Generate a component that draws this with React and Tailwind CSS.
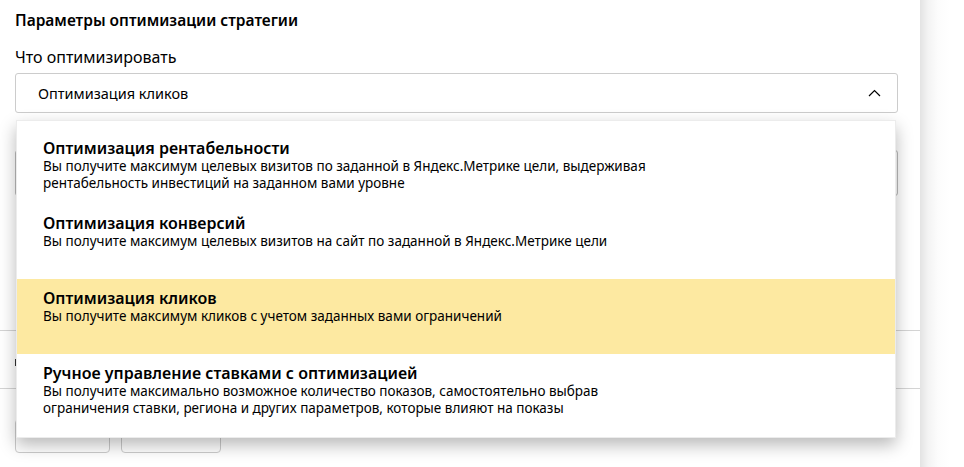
import React from "react";

const items = [
  {
    title: "Оптимизация рентабельности",
    desc: [
      "Вы получите максимум целевых визитов по заданной в Яндекс.Метрике цели, выдерживая",
      "рентабельность инвестиций на заданном вами уровне",
    ],
  },
  {
    title: "Оптимизация конверсий",
    desc: ["Вы получите максимум целевых визитов на сайт по заданной в Яндекс.Метрике цели"],
  },
  {
    title: "Оптимизация кликов",
    desc: ["Вы получите максимум кликов с учетом заданных вами ограничений"],
    active: true,
  },
  {
    title: "Ручное управление ставками с оптимизацией",
    desc: [
      "Вы получите максимально возможное количество показов, самостоятельно выбрав",
      "ограничения ставки, региона и других параметров, которые влияют на показы",
    ],
  },
];

export default function App() {
  return (
    <div className="flex w-[964px] h-[467px] overflow-hidden bg-white text-black font-['Noto_Sans',Arial,sans-serif]">
      <div className="relative w-[920px] h-full bg-white">
        <div className="pt-[10px]">
          <div className="px-[15px]">
            <h2 className="text-[15.5px] leading-[20px] font-semibold">Параметры оптимизации стратегии</h2>
            <div className="mt-[16px] text-[16px] leading-[22px]">Что оптимизировать</div>
            <div className="mt-[5px] w-[883px] h-[40px] rounded-[3px] border border-[#cccccc] flex items-center justify-between pl-[22px] pr-[16px]">
              <span className="text-[14.5px] leading-[20px]">Оптимизация кликов</span>
              <svg width="13" height="8" viewBox="0 0 13 8">
                <polyline points="1,7 6.5,1.5 12,7" fill="none" stroke="#000" strokeWidth="1.2" />
              </svg>
            </div>
            <div className="mt-[37px] w-[883px] h-[46px] rounded-[3px] border border-[#bbbbbb]" />
          </div>
          <div className="mt-[134px] border-t border-[#d4d4d4] h-[58px] px-[15px] pt-[28px]">
            <div className="w-[2px] h-[7px] bg-[#333333]" />
          </div>
          <div className="border-t border-[#d4d4d4] px-[15px] pt-[30px] flex gap-[11px]">
            <div className="w-[95px] h-[34px] rounded-[4px] border border-[#cccccc]" />
            <div className="w-[100px] h-[34px] rounded-[4px] border border-[#cccccc]" />
          </div>
        </div>

        <div className="absolute left-[16px] top-[120px] w-[880px] bg-white border border-[#ececec] py-[8px] shadow-[0_7px_16px_rgba(0,0,0,0.28)]">
          {items.map((it) => (
            <div
              key={it.title}
              className={`h-[75px] px-[26px] pt-[10px] ${it.active ? "bg-[#fde9a1]" : ""}`}
            >
              <div className="text-[16px] leading-[19px] font-semibold">{it.title}</div>
              {it.desc.map((d) => (
                <div key={d} className="text-[13.5px] leading-[17px]">{d}</div>
              ))}
            </div>
          ))}
        </div>
      </div>
      <div className="flex-1 h-full bg-[linear-gradient(to_right,#e3e3e3,#f3f3f3_8px,#fcfcfc_18px,#ffffff_30px)]" />
    </div>
  );
}
